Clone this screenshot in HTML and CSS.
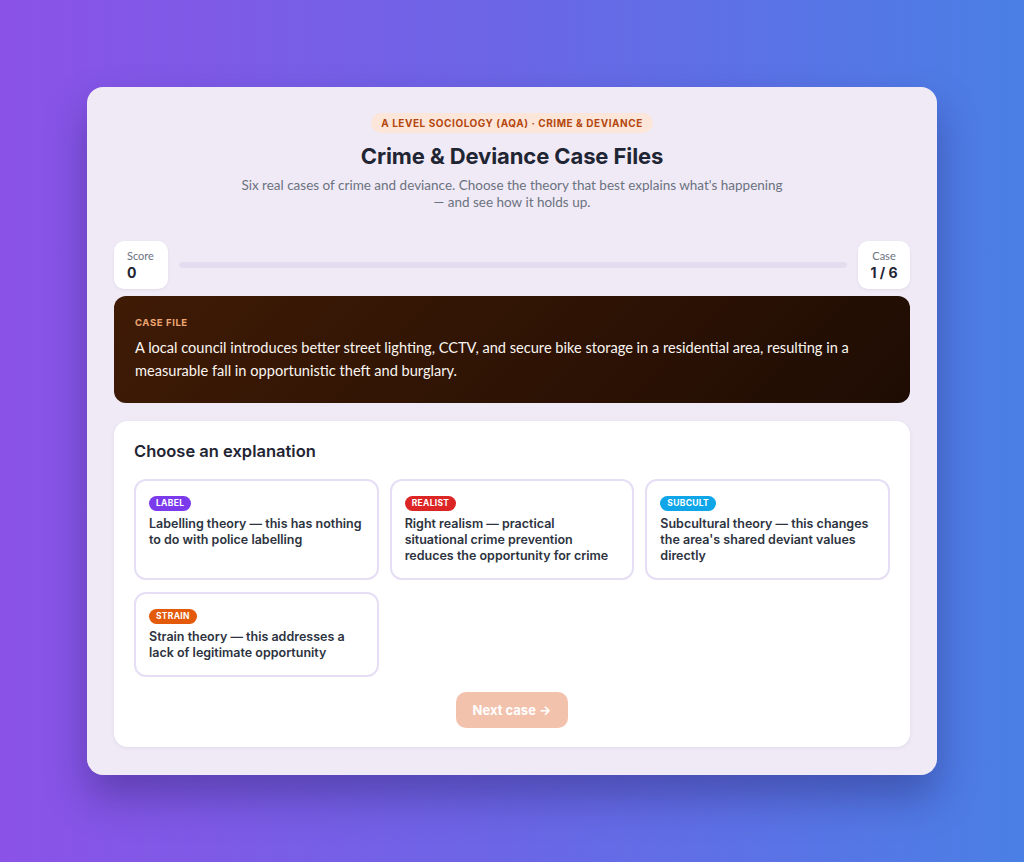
FILE: index.html
```html
<!DOCTYPE html>
<html lang="en">
<head>
<meta charset="utf-8">
<title>Crime &amp; Deviance Case Files</title>
<link rel="stylesheet" href="styles.css">
</head>
<body>
<main class="shell">
  <header class="head">
    <span class="pill">A LEVEL SOCIOLOGY (AQA) · CRIME &amp; DEVIANCE</span>
    <h1 class="title">Crime &amp; Deviance Case Files</h1>
    <p class="sub">Six real cases of crime and deviance. Choose the theory that best explains what's happening<br>— and see how it holds up.</p>
  </header>

  <div class="status">
    <div class="stat">
      <div class="stat-label">Score</div>
      <div class="stat-value">0</div>
    </div>
    <div class="track"><div class="fill" style="width:0%"></div></div>
    <div class="stat stat-right">
      <div class="stat-label">Case</div>
      <div class="stat-value">1 / 6</div>
    </div>
  </div>

  <section class="casefile">
    <div class="case-label">CASE FILE</div>
    <p class="case-text">A local council introduces better street lighting, CCTV, and secure bike storage in a residential area, resulting in a measurable fall in opportunistic theft and burglary.</p>
  </section>

  <section class="panel">
    <h2 class="panel-title">Choose an explanation</h2>
    <div class="options">
      <button class="option"><span class="badge b-label">LABEL</span><span class="opt-text">Labelling theory — this has nothing to do with police labelling</span></button>
      <button class="option"><span class="badge b-realist">REALIST</span><span class="opt-text">Right realism — practical situational crime prevention reduces the opportunity for crime</span></button>
      <button class="option"><span class="badge b-subcult">SUBCULT</span><span class="opt-text">Subcultural theory — this changes the area's shared deviant values directly</span></button>
      <button class="option"><span class="badge b-strain">STRAIN</span><span class="opt-text">Strain theory — this addresses a lack of legitimate opportunity</span></button>
    </div>
    <div class="actions">
      <button class="next" disabled>Next case →</button>
    </div>
  </section>
</main>
</body>
</html>
```

FILE: styles.css
```css
* { box-sizing: border-box; }
html, body { margin: 0; padding: 0; }
body {
  min-height: 862px;
  background: linear-gradient(90deg, #8b52e7 0%, #6b66e6 50%, #4a7fe5 100%);
  font-family: "Lato", "Liberation Sans", sans-serif;
  padding-top: 87px;
  padding-bottom: 87px;
}
.shell {
  width: 850px;
  margin: 0 auto;
  background: #f0eaf6;
  border-radius: 16px;
  padding: 26px 27px 28px;
  box-shadow: 0 22px 40px rgba(30, 20, 80, 0.35);
}
.head {
  display: flex;
  flex-direction: column;
  align-items: center;
  text-align: center;
}
.pill {
  display: block;
  height: 20px;
  line-height: 20px;
  padding: 0 10px;
  border-radius: 10px;
  background: #fce6d9;
  color: #b5460f;
  font-family: "Inter", sans-serif;
  font-weight: 700;
  font-size: 10px;
  letter-spacing: 0.55px;
}
.title {
  margin: 9px 0 0;
  font-family: "Inter", sans-serif;
  font-weight: 700;
  font-size: 22px;
  line-height: 28px;
  color: #1f2533;
  letter-spacing: -0.1px;
}
.sub {
  margin: 7px 0 0;
  font-size: 13.5px;
  line-height: 17px;
  color: #6b7280;
}
.status {
  display: flex;
  align-items: center;
  margin-top: 30px;
}
.stat {
  background: #fff;
  border-radius: 10px;
  width: 54px;
  height: 48px;
  padding: 8px 13px;
  box-shadow: 0 1px 3px rgba(60, 40, 100, 0.08);
}
.stat-right { width: 52px; text-align: center; padding: 8px 6px; }
.stat-label { font-size: 11px; line-height: 14px; color: #6b7280; }
.stat-value {
  font-family: "Inter", sans-serif;
  font-weight: 700;
  font-size: 14px;
  line-height: 18px;
  color: #1f2533;
  margin-top: 1px;
}
.track {
  flex: 1;
  height: 6px;
  margin: 0 11px;
  border-radius: 3px;
  background: #e4dcef;
  overflow: hidden;
}
.fill { height: 100%; background: #e36a2e; }
.casefile {
  margin-top: 7px;
  border-radius: 12px;
  padding: 21px 21px 21px;
  background: linear-gradient(135deg, #3f1b05 0%, #2c1204 60%, #1e0c03 100%);
  color: #fff;
}
.case-label {
  font-family: "Inter", sans-serif;
  font-weight: 700;
  font-size: 9.5px;
  line-height: 12px;
  letter-spacing: 0.6px;
  color: #f0a774;
}
.case-text {
  margin: 7px 0 0;
  font-size: 14.6px;
  line-height: 23px;
  color: #fbf6f1;
}
.panel {
  margin-top: 18px;
  background: #fff;
  border-radius: 14px;
  padding: 19px 20px 19px;
  box-shadow: 0 1px 4px rgba(60, 40, 100, 0.08);
}
.panel-title {
  margin: 0;
  font-family: "Inter", sans-serif;
  font-weight: 600;
  font-size: 16.5px;
  line-height: 22px;
  color: #1f2533;
}
.options {
  margin-top: 17px;
  display: grid;
  grid-template-columns: repeat(3, 1fr);
  column-gap: 11px;
  row-gap: 12px;
}
.option {
  display: flex;
  flex-direction: column;
  align-items: flex-start;
  text-align: left;
  background: #fff;
  border: 2px solid #e6def5;
  border-radius: 12px;
  padding: 15px 13px 14px;
  font: inherit;
  cursor: pointer;
}
.badge {
  display: inline-block;
  height: 15px;
  line-height: 15px;
  padding: 0 7px;
  border-radius: 8px;
  color: #fff;
  font-family: "Inter", sans-serif;
  font-weight: 700;
  font-size: 8.5px;
  letter-spacing: 0.3px;
}
.b-label { background: #7c3aed; }
.b-realist { background: #dc2626; }
.b-subcult { background: #0ea5e9; }
.b-strain { background: #e35a0b; }
.opt-text {
  margin-top: 5px;
  font-family: "Inter", sans-serif;
  font-weight: 600;
  font-size: 12.5px;
  line-height: 16px;
  color: #2d3340;
}
.actions {
  display: flex;
  justify-content: center;
  margin-top: 15px;
}
.next {
  width: 112px;
  height: 36px;
  border: none;
  border-radius: 10px;
  background: #f2c2ad;
  color: #fff;
  font-family: "Inter", sans-serif;
  font-weight: 700;
  font-size: 13px;
}
```
